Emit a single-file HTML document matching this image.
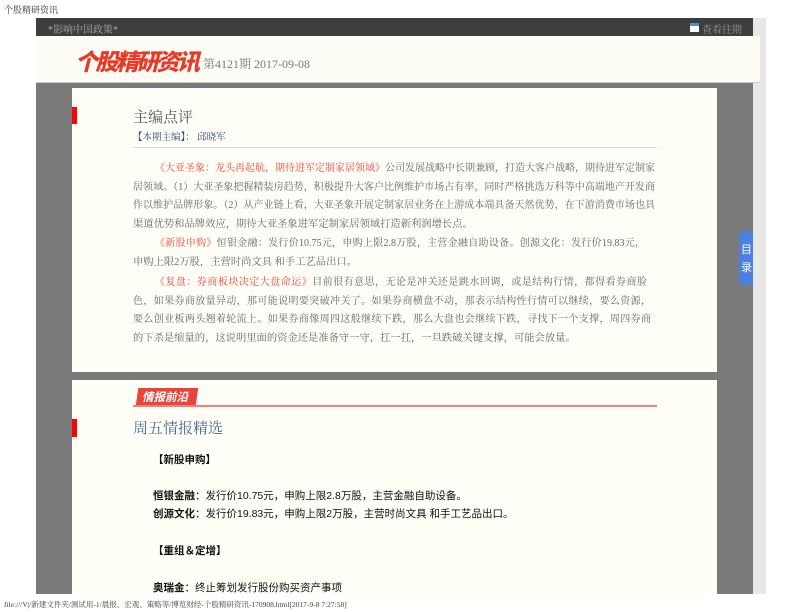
<!DOCTYPE html>
<html><head><meta charset="utf-8"><style>
body{margin:0;width:792px;height:612px;background:#fff;position:relative;overflow:hidden;font-family:"Liberation Serif","Noto Serif CJK SC",serif;}
.a{position:absolute;}
.p{font-size:10px;color:#666;line-height:18.5px;}
.p div{white-space:nowrap;height:18.5px;font-size:10.3px}
.p .j{text-align:justify;text-align-last:justify;white-space:normal;overflow:hidden;font-size:10px}
.r{color:#e8443a;}
.s{font-family:"Liberation Sans","Noto Sans CJK SC",sans-serif;font-size:10.5px;color:#111;}
</style></head><body>
<div class="a" style="left:4px;top:3px;font-size:9px;color:#333;">个股精研资讯</div>
<div class="a" style="left:753px;top:18px;width:13px;height:576px;background:#e8e8e8"></div>
<div class="a" style="left:36px;top:18px;width:717px;height:18px;background:#3e3e3e"></div>
<div class="a" style="left:48px;top:21px;font-size:10px;color:#aaa;">*影响中国政策*</div>
<div class="a" style="left:690px;top:23px;width:9px;height:9px;background:linear-gradient(#4a90d9 35%,#fff 35%);"></div>
<div class="a" style="left:702px;top:21px;font-size:10px;color:#999;">查看往期</div>
<div class="a" style="left:36px;top:36px;width:724px;height:46px;background:#fdfdf5;border-bottom:1px solid #ccc"></div>
<div class="a" style="left:75px;top:45px;font-family:'Noto Sans CJK SC',sans-serif;font-weight:900;font-style:italic;font-size:23px;color:#e83a26;line-height:30px;letter-spacing:-2.6px;white-space:nowrap">个股精研资讯</div>
<div class="a" style="left:203px;top:55px;font-size:12px;color:#777;">第4121期 2017-09-08</div>
<div class="a" style="left:36px;top:83px;width:717px;height:511px;background:#7a7a7a"></div>
<div class="a" style="left:72px;top:88px;width:645px;height:284px;background:#fefef6"></div>
<div class="a" style="left:72px;top:107px;width:5px;height:17px;background:#f00"></div>
<div class="a" style="left:133px;top:106px;font-size:15px;color:#555;">主编点评</div>
<div class="a" style="left:133px;top:129px;font-size:9.5px;color:#2a4a7a;">【本期主编】： 邱晓军</div>
<div class="a" style="left:133px;top:147px;width:524px;height:1px;background:#ddd"></div>
<div class="a p" style="left:133px;top:160px;">
<div class="j" style="margin-left:22px;width:500px"><span class="r">《大亚圣象：龙头再起航，期待进军定制家居领域》</span>公司发展战略中长期兼顾，打造大客户战略，期待进军定制家</div>
<div class="j" style="width:522px">居领域。（1）大亚圣象把握精装房趋势，积极提升大客户比例维护市场占有率，同时严格挑选万科等中高端地产开发商合</div>
<div class="j" style="width:522px">作以维护品牌形象。（2）从产业链上看，大亚圣象开展定制家居业务在上游成本端具备天然优势，在下游消费市场也具备</div>
<div>渠道优势和品牌效应，期待大亚圣象进军定制家居领域打造新利润增长点。</div>
</div>
<div class="a p" style="left:133px;top:235px;">
<div class="j" style="margin-left:22px;width:490px"><span class="r">《新股申购》</span>恒银金融：发行价10.75元，申购上限2.8万股，主营金融自助设备。创源文化：发行价19.83元，</div>
<div>申购上限2万股，主营时尚文具 和手工艺品出口。</div>
</div>
<div class="a p" style="left:133px;top:274px;">
<div class="j" style="margin-left:22px;width:492px"><span class="r">《复盘：券商板块决定大盘命运》</span>目前很有意思，无论是冲关还是跳水回调，或是结构行情，都得看券商脸</div>
<div class="j" style="width:518px">色，如果券商放量异动，那可能说明要突破冲关了。如果券商横盘不动，那表示结构性行情可以继续，要么资源，</div>
<div class="j" style="width:518px">要么创业板两头翘着轮流上。如果券商像周四这般继续下跌，那么大盘也会继续下跌，寻找下一个支撑，周四券商</div>
<div>的下杀是缩量的，这说明里面的资金还是准备守一守，扛一扛，一旦跌破关键支撑，可能会放量。</div>
</div>
<div class="a" style="left:72px;top:380px;width:645px;height:214px;background:#fefef6"></div>
<div class="a" style="left:137px;top:388px;width:60px;height:18px;background:#e8443a;transform:skewX(-8deg)"></div>
<div class="a" style="left:142px;top:389px;font-family:'Noto Sans CJK SC',sans-serif;font-weight:bold;font-style:italic;font-size:11.5px;color:#fff">情报前沿</div>
<div class="a" style="left:133px;top:405px;width:524px;height:2px;background:#f08080"></div>
<div class="a" style="left:72px;top:419px;width:5px;height:18px;background:#f00"></div>
<div class="a" style="left:133px;top:417px;font-size:15px;color:#4a6a95;">周五情报精选</div>
<div class="a s" style="left:153px;top:452px;font-weight:bold">【新股申购】</div>
<div class="a s" style="left:153px;top:488px;"><b>恒银金融</b>：发行价10.75元，申购上限2.8万股，主营金融自助设备。</div>
<div class="a s" style="left:153px;top:506px;"><b>创源文化</b>：发行价19.83元，申购上限2万股，主营时尚文具 和手工艺品出口。</div>
<div class="a s" style="left:153px;top:543px;font-weight:bold">【重组＆定增】</div>
<div class="a s" style="left:153px;top:580px;"><b>奥瑞金</b>：终止筹划发行股份购买资产事项</div>
<div class="a" style="left:739px;top:231px;width:14px;height:54px;background:#4a80e0;border-radius:4px 0 0 4px"></div>
<div class="a" style="left:741px;top:240px;font-family:'Noto Sans CJK SC',sans-serif;font-size:11px;color:#fff;line-height:18px;width:10px">目录</div>
<div class="a" style="left:4px;top:599px;font-size:7.5px;color:#444;">file:///V|/新建文件夹/测试用-1/晨报、宏观、策略等/博览财经-个股精研资讯-170908.html[2017-9-8 7:27:58]</div>
</body></html>
